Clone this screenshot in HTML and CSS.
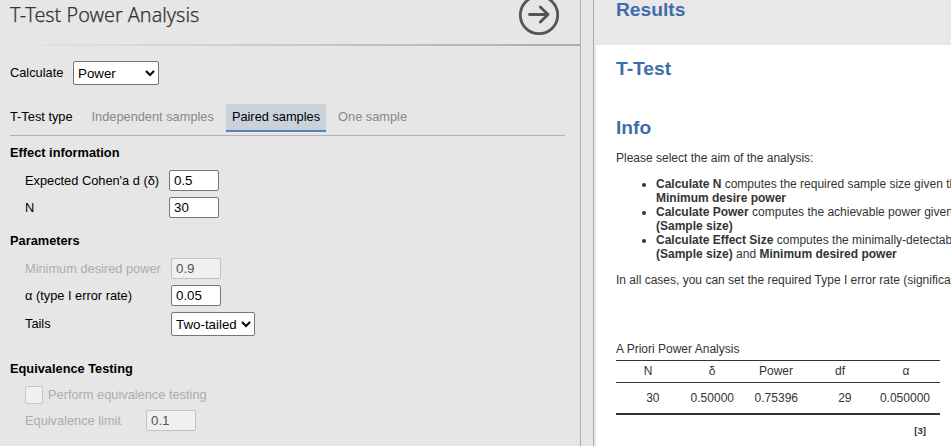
FILE: index.html
```html
<!DOCTYPE html>
<html lang="en">
<head>
<meta charset="utf-8">
<title>T-Test Power Analysis</title>
<link rel="stylesheet" href="styles.css">
</head>
<body>
<main class="app">
  <section class="options">
    <header class="options-header">
      <h1>T-Test Power Analysis</h1>
      <svg class="go" width="42" height="42" viewBox="0 0 42 42" fill="none" stroke="#555" stroke-width="2.8" stroke-linecap="round" stroke-linejoin="round">
        <circle cx="21" cy="21" r="18.7"/>
        <path d="M11.5 20.5H30M22.3 12.9L30 20.5L22.3 28.1"/>
      </svg>
    </header>
    <div class="rule"></div>
    <div class="options-body">
      <div class="row calculate">
        <label>Calculate</label>
        <select class="sel-calculate"><option>Power</option></select>
      </div>
      <div class="tabs">
        <span class="tabs-label">T-Test type</span>
        <span class="tab">Independent samples</span>
        <span class="tab active">Paired samples</span>
        <span class="tab">One sample</span>
      </div>
      <h2 class="first">Effect information</h2>
      <div class="grid effect">
        <label>Expected Cohen'a d (δ)</label><input type="text" value="0.5">
        <label>N</label><input type="text" value="30">
      </div>
      <h2 class="params">Parameters</h2>
      <div class="grid parameters">
        <label class="off">Minimum desired power</label><input type="text" value="0.9" disabled>
        <label>α (type I error rate)</label><input type="text" value="0.05">
        <label class="tails">Tails</label><select class="sel-tails"><option>Two-tailed</option></select>
      </div>
      <h2 class="equiv">Equivalence Testing</h2>
      <div class="row check off"><span class="box"></span><label>Perform equivalence testing</label></div>
      <div class="row limit off"><label>Equivalence limit</label><input type="text" value="0.1" disabled></div>
    </div>
  </section>
  <div class="splitter"></div>
  <section class="results">
    <div class="results-header">Results</div>
    <div class="page">
      <h2 class="title">T-Test</h2>
      <h2 class="title info">Info</h2>
      <p>Please select the aim of the analysis:</p>
      <ul>
        <li><b>Calculate N</b> computes the required sample size given th<br><b>Minimum desire power</b></li>
        <li><b>Calculate Power</b> computes the achievable power given<br><b>(Sample size)</b></li>
        <li><b>Calculate Effect Size</b> computes the minimally-detectab<br><b>(Sample size)</b> and <b>Minimum desired power</b></li>
      </ul>
      <p>In all cases, you can set the required Type I error rate (significa</p>
      <table>
        <caption>A Priori Power Analysis</caption>
        <colgroup><col><col><col><col><col class="wide"></colgroup>
        <thead><tr><th>N</th><th>δ</th><th>Power</th><th>df</th><th>α</th></tr></thead>
        <tbody><tr><td class="int">30</td><td>0.50000</td><td>0.75396</td><td class="int">29</td><td>0.050000</td></tr></tbody>
      </table>
      <div class="ref">[3]</div>
    </div>
  </section>
</main>
</body>
</html>
```
FILE: styles.css
```css
* { box-sizing: border-box; }
body {
  margin: 0;
  overflow: hidden;
  font-family: "Liberation Sans", Arial, sans-serif;
  font-size: 12.8px;
  color: #000;
  background: #e6e6e6;
}
h1, h2, p { margin: 0; }
.app { display: flex; width: 951px; height: 446px; overflow: hidden; }

.options { width: 581px; flex: none; border-right: 1px solid #acacac; }
.options-header {
  display: flex;
  justify-content: space-between;
  height: 44px;
  padding: 0 20px 0 10px;
}
.options-header h1 {
  font: 300 19.8px/30px "Noto Sans", sans-serif;
  color: #333;
  -webkit-text-stroke: 0.25px #333;
}
.go { margin-top: -6px; }
.rule { height: 2px; background: linear-gradient(to right, #e6e6e6, #acacac); }
.options-body { padding: 15px 15px 0 10px; }
.row { display: flex; align-items: center; }
.calculate { height: 24px; }
.calculate label { width: 63px; padding-bottom: 1px; }
select, input {
  font: 13.333px "Liberation Sans", Arial, sans-serif;
  margin: 0;
  border: 1px solid #767676;
  border-radius: 2px;
  background-color: #fff;
  color: #000;
}
select { height: 24px; padding: 0; }
input { width: 50px; height: 21px; padding: 1px 4px; }
input:disabled { background: #f0f0f0; border-color: #c2c2c2; color: #545454; }
.sel-calculate { width: 86px; }
.sel-tails { width: 84px; }

.tabs {
  display: flex;
  height: 32px;
  margin-top: 19px;
  border-bottom: 1px solid #b3b3b3;
  line-height: 26px;
}
.tabs-label { width: 75.5px; }
.tab { height: 28px; padding: 0 6px; margin-right: 6px; color: #888; }
.tab.active { color: #000; background: #c9d1da; border-bottom: 2px solid #5780bb; }

.options-body h2 { font-size: 12.8px; line-height: 16px; }
.options-body .first { margin-top: 9px; }
.options-body .params { margin-top: 15px; }
.options-body .equiv { margin-top: 25px; }
.grid { display: grid; margin-left: 15px; row-gap: 6px; align-items: center; justify-content: start; }
.effect { grid-template-columns: 144px auto; margin-top: 9px; }
.parameters { grid-template-columns: 146px auto; margin-top: 9px; }
.tails { padding-bottom: 2px; }
.off { color: #acacac; }
.check { height: 18px; margin: 9px 0 0 15px; gap: 5px; }
.check label { padding-bottom: 1px; }
.box { width: 18px; height: 18px; border: 1px solid #c6c6c6; border-radius: 2px; background: #f0f0f0; }
.limit { height: 21px; margin: 6px 0 0 15px; }
.limit label { width: 121px; }

.splitter { width: 13px; flex: none; border-right: 1px solid #acacac; }

.results { flex: 1; min-width: 0; overflow: hidden; padding-left: 2px; background: #e8e8e8; color: #333; font-size: 12px; line-height: 14px; }
.results-header { height: 45px; padding-left: 20px; color: #3e6da9; font-size: 19.2px; font-weight: bold; line-height: 20px; }
.page { height: 401px; padding: 12px 0 0 20px; background: #fff; white-space: nowrap; }
.title { color: #3e6da9; font-size: 19.2px; line-height: 24px; }
.info { margin: 35px 0 11px; }
ul { margin: 12px 0; padding-left: 40px; }
table { width: 324px; margin-top: 54px; border-collapse: separate; border-spacing: 0; table-layout: fixed; }
caption { text-align: left; height: 19px; line-height: 16px; }
col { width: 64px; }
.wide { width: 68px; }
th, td { padding: 0; }
th { height: 23px; padding-bottom: 1px; font-weight: normal; border-top: 1px solid #333; border-bottom: 1px solid #333; }
td { height: 32px; text-align: right; padding-right: 10px; border-bottom: 2px solid #333; }
.int { padding-right: 20.5px; }
.ref { width: 310px; margin-top: 9px; text-align: right; font-size: 9.6px; font-weight: bold; }
```
